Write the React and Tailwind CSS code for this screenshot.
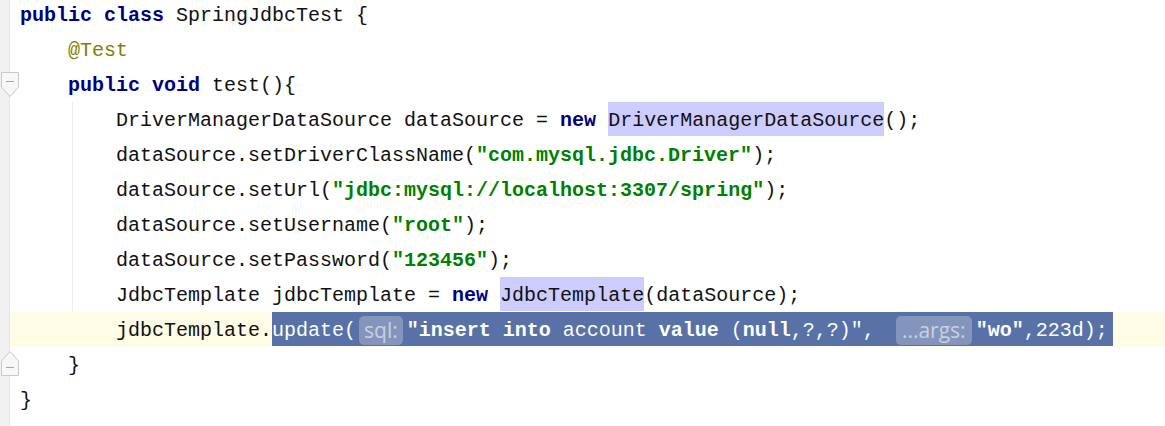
import React from "react";

const kw = "text-[#000080] font-bold";
const str = "text-[#008000] font-bold";
const ann = "text-[#808000]";
const ref = "inline-block bg-[#ccccff]";

const Hint = ({ children, wide }) => (
  <span
    className={`${wide ? "ml-[9px] px-[6px]" : "ml-[3px] px-[5px]"} mr-[4px] inline-flex h-[29px] items-center rounded-[5px] bg-[#8495bd] align-middle font-['Open_Sans','Liberation_Sans',sans-serif] text-[21px] font-normal leading-none text-[#c9d0de]`}
  >
    {children}
  </span>
);

const FoldDown = () => (
  <svg width="20" height="27" viewBox="0 0 20 27" className="absolute left-0 top-[4px]">
    <path d="M1.5 1.5 H18.5 V16 L10 25.5 L1.5 16 Z" fill="#f7f7f7" stroke="#c9c9c9" />
    <path d="M6 10.5 H14" stroke="#a9a9a9" strokeWidth="1" />
  </svg>
);

const FoldUp = () => (
  <svg width="20" height="27" viewBox="0 0 20 27" className="absolute left-0 top-[3px]">
    <path d="M1.5 11 L10 1.5 L18.5 11 V25.5 H1.5 Z" fill="#f7f7f7" stroke="#c9c9c9" />
    <path d="M6 17.5 H14" stroke="#a9a9a9" strokeWidth="1" />
  </svg>
);

const Line = ({ indent = 0, current, fold, children }) => (
  <div className={`relative h-[35px] ${current ? "bg-[#fefbe6]" : ""}`}>
    {fold}
    <div className="h-[35px] whitespace-pre pl-[10px] leading-[37px]">
      {"    ".repeat(indent)}
      {children}
    </div>
  </div>
);

export default function App() {
  return (
    <div className="flex h-[426px] w-[1165px] overflow-hidden bg-white font-['Liberation_Mono',monospace] text-[20px] text-[#111]">
      <div className="w-[10px] shrink-0 border-r border-[#e6e6e6] bg-[#f0f0f0]" />
      <div className="relative -mt-[3px] flex-1">
        <Line>
          <span className={kw}>public class</span> SpringJdbcTest {"{"}
        </Line>
        <Line indent={1}>
          <span className={ann}>@Test</span>
        </Line>
        <Line indent={1} fold={<div className="absolute -left-[10px] top-0"><FoldDown /></div>}>
          <span className={kw}>public void</span> test(){"{"}
        </Line>
        <div className="relative">
          <div className="absolute left-[62px] top-0 h-full w-px bg-[#ececec]" />
          <Line indent={2}>
            DriverManagerDataSource dataSource = <span className={kw}>new</span>{" "}
            <span className={`${ref} h-[34px] align-top`}>DriverManagerDataSource</span>();
          </Line>
          <Line indent={2}>
            dataSource.setDriverClassName(<span className={str}>"com.mysql.jdbc.Driver"</span>);
          </Line>
          <Line indent={2}>
            dataSource.setUrl(<span className={str}>"jdbc:mysql://localhost:3307/spring"</span>);
          </Line>
          <Line indent={2}>
            dataSource.setUsername(<span className={str}>"root"</span>);
          </Line>
          <Line indent={2}>
            dataSource.setPassword(<span className={str}>"123456"</span>);
          </Line>
          <Line indent={2}>
            JdbcTemplate jdbcTemplate = <span className={kw}>new</span>{" "}
            <span className={`${ref} h-[34px] align-top`}>JdbcTemplate</span>(dataSource);
          </Line>
          <Line indent={2} current>
            jdbcTemplate.
            <span className="inline-block h-[34px] bg-[#5872a8] pr-[5px] align-top text-white">
              update(<Hint>sql:</Hint>
              <span className="font-bold">"insert into</span> account{" "}
              <span className="font-bold">value</span> (<span className="font-bold">null</span>,?,?)",{" "}
              <Hint wide>...args:</Hint>
              <span className="font-bold">"wo"</span>,223d);
            </span>
          </Line>
        </div>
        <Line indent={1} fold={<div className="absolute -left-[10px] top-0"><FoldUp /></div>}>
          {"}"}
        </Line>
        <Line>{"}"}</Line>
      </div>
    </div>
  );
}
